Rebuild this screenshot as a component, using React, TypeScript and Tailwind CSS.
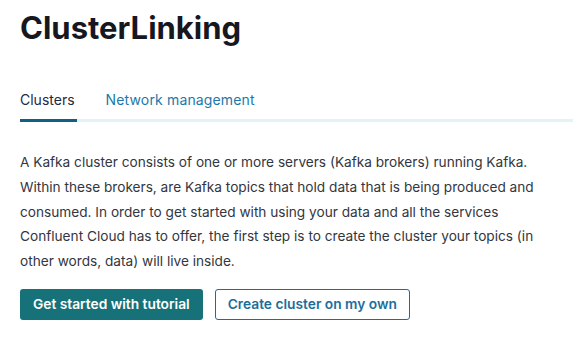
export default function App() {
  return (
    <div className="min-h-screen bg-white pl-5 pt-2 font-['Inter',sans-serif]">
      <h1 className="text-[31px] font-bold leading-[40px] text-[#17171f]">
        ClusterLinking
      </h1>

      {/* Tabs */}
      <div className="mt-[42px] flex border-b-[3px] border-[#e1f3f9]">
        <button className="-mb-[3px] border-b-[3px] border-[#0f5f87] pb-[9px] pr-[2px] text-[14px] font-normal leading-5 text-[#1f2940]">
          Clusters
        </button>
        <button className="ml-[29px] pb-[9px] text-[14px] font-normal leading-5 tracking-[0.15px] text-[#1c78a8]">
          Network management
        </button>
      </div>

      <p className="mt-[28px] max-w-[522px] text-[13.65px] leading-[24.75px] text-[#333640]">
        A Kafka cluster consists of one or more servers (Kafka brokers) running Kafka.
        Within these brokers, are Kafka topics that hold data that is being produced and
        consumed. In order to get started with using your data and all the services
        Confluent Cloud has to offer, the first step is to create the cluster your topics (in
        other words, data) will live inside.
      </p>

      <div className="mt-[15px] flex gap-3">
        <button className="h-[31px] rounded-[3px] bg-[#167278] px-[13px] text-[13.75px] font-semibold text-white">
          Get started with tutorial
        </button>
        <button className="h-[31px] rounded-[3px] border border-[#1f6f8b] bg-white px-[12px] text-[13.75px] font-semibold text-[#1b6e9c]">
          Create cluster on my own
        </button>
      </div>
    </div>
  );
}
